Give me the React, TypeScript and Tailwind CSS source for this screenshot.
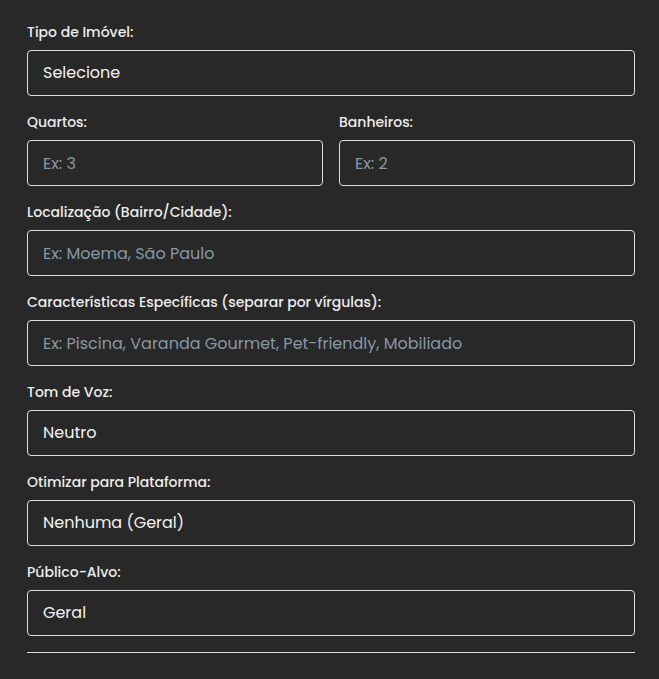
import React from "react";

function Label({ children }: { children: React.ReactNode }) {
  return (
    <label className="block mb-2 text-sm leading-5 font-medium text-[#ececec]">
      {children}
    </label>
  );
}

const boxClass =
  "block w-full h-[46px] px-[15px] rounded-[4px] border border-[#dcdcdc] bg-[#282828] text-base text-[#f2f2f2] outline-none placeholder:text-[#8797a6] appearance-none";

function Select({ value, options }: { value: string; options: string[] }) {
  return (
    <select className={boxClass} defaultValue={value}>
      {options.map((o) => (
        <option key={o}>{o}</option>
      ))}
    </select>
  );
}

function Field({ label, children }: { label: string; children: React.ReactNode }) {
  return (
    <div className="mb-4">
      <Label>{label}</Label>
      {children}
    </div>
  );
}

export default function App() {
  return (
    <div className="min-h-screen bg-[#282828] pl-[27px] pr-6 pt-[22px] pb-8 font-['Poppins','Open_Sans',sans-serif]">
      <Field label="Tipo de Imóvel:">
        <Select value="Selecione" options={["Selecione", "Apartamento", "Casa", "Terreno"]} />
      </Field>

      {/* Quartos / Banheiros */}
      <div className="grid grid-cols-2 gap-4">
        <Field label="Quartos:">
          <input className={boxClass} placeholder="Ex: 3" />
        </Field>
        <Field label="Banheiros:">
          <input className={boxClass} placeholder="Ex: 2" />
        </Field>
      </div>

      <Field label="Localização (Bairro/Cidade):">
        <input className={boxClass} placeholder="Ex: Moema, São Paulo" />
      </Field>

      <Field label="Características Específicas (separar por vírgulas):">
        <input
          className={boxClass}
          placeholder="Ex: Piscina, Varanda Gourmet, Pet-friendly, Mobiliado"
        />
      </Field>

      <Field label="Tom de Voz:">
        <Select value="Neutro" options={["Neutro", "Formal", "Descontraído"]} />
      </Field>

      <Field label="Otimizar para Plataforma:">
        <Select value="Nenhuma (Geral)" options={["Nenhuma (Geral)", "Instagram", "Portal"]} />
      </Field>

      <Field label="Público-Alvo:">
        <Select value="Geral" options={["Geral", "Famílias", "Investidores"]} />
      </Field>

      <hr className="border-0 border-t border-[#dcdcdc]" />
    </div>
  );
}
